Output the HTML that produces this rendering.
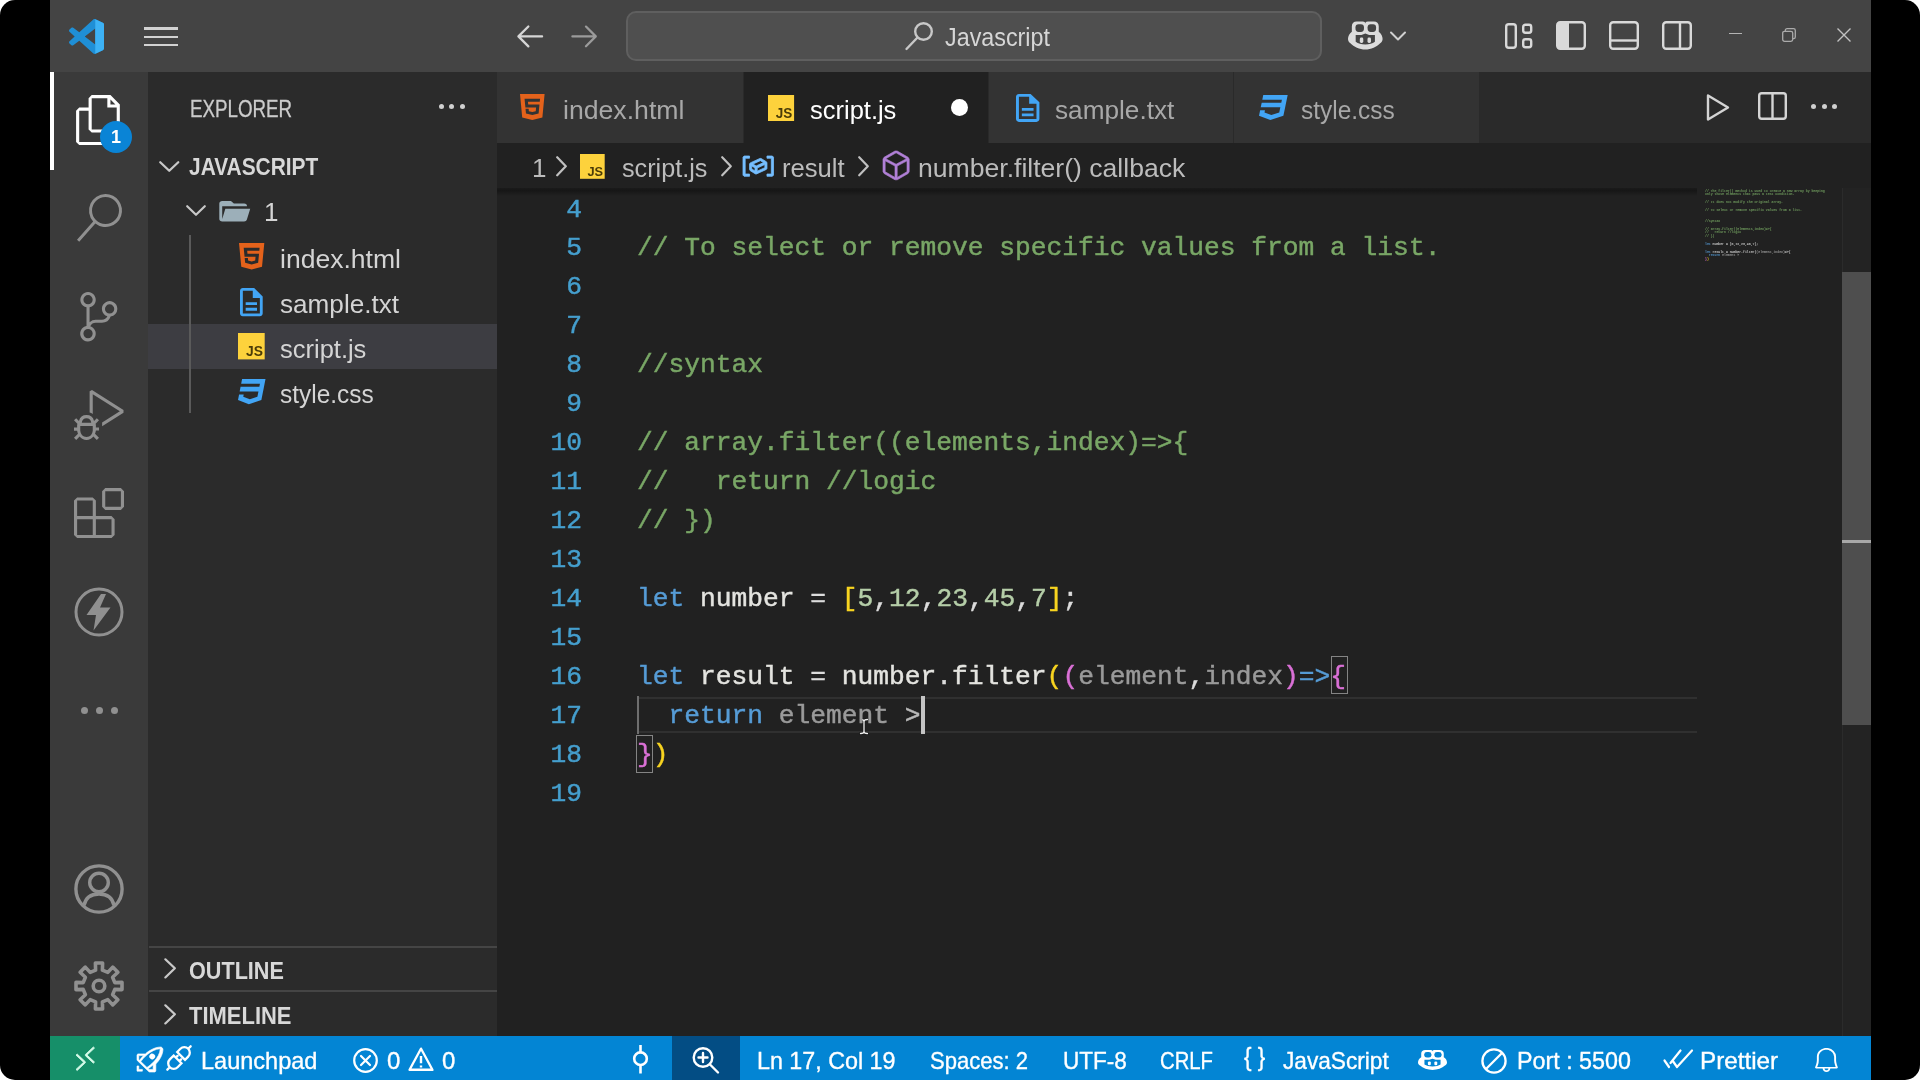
<!DOCTYPE html>
<html lang="en">
<head>
<meta charset="utf-8">
<title>script.js - Javascript - Visual Studio Code</title>
<style>
*{box-sizing:border-box;margin:0;padding:0}
html,body{width:1920px;height:1080px;overflow:hidden;background:#fff}
body{font-family:"Liberation Sans",sans-serif;color:#ccc;position:relative}
.abs{position:absolute}
#frame{position:absolute;left:0;top:0;width:1920px;height:1080px;background:#000;border-radius:15px;overflow:hidden}
#win{position:absolute;left:50px;top:0;width:1821px;height:1080px;background:#212121;overflow:hidden;will-change:transform}
/* title bar */
#title{position:absolute;left:0;top:0;width:1821px;height:72px;background:#444444}
#search{position:absolute;left:576px;top:11px;width:696px;height:50px;border-radius:10px;background:#4f4f4f;border:2px solid #5f5f5f}
#search span{position:absolute;left:317px;top:10px;font-size:25px;color:#d6d6d6;white-space:nowrap}
/* activity bar */
#act{position:absolute;left:0;top:72px;width:99px;height:964px;background:#3a3a3a}
#act .ind{position:absolute;left:0;top:0;width:4px;height:98px;background:#fff}
/* side bar */
#side{position:absolute;left:99px;top:72px;width:348px;height:964px;background:#2b2b2b;box-shadow:-1px 0 0 #2b2b2b}
#side .t{position:absolute;white-space:nowrap;font-size:26px;color:#d4d4d4;line-height:30px}
#side .b{font-weight:bold;font-size:23px;color:#d8d8d8}
#side .sel{position:absolute;left:-1px;top:252px;width:349px;height:45px;background:#3d3d42}
#side .guide{position:absolute;left:40.200px;top:163px;width:2px;height:178px;background:#5a5a5a}
#side .hr{position:absolute;left:0;width:348px;height:2px;background:#454545}
/* editor */
#tabs{position:absolute;left:447px;top:72px;width:1374px;height:71px;background:#2a2a2a}
.tab{position:absolute;top:0;height:71px;background:#333333}
.tab.on{background:#212121}
.tab span{position:absolute;top:22px;font-size:26px;line-height:32px;white-space:nowrap;color:#a8a8a8}
.tab.on span{color:#fff}
#crumb{position:absolute;left:447px;top:143px;width:1374px;height:45px;background:#212121}
#crumb span{position:absolute;top:8.5px;font-size:26px;line-height:32px;white-space:nowrap;color:#bcbcbc}
#crumbshadow{position:absolute;left:447px;top:188px;width:1200px;height:8px;background:linear-gradient(#1b1b1b,#161616 30%,rgba(33,33,33,0))}
#code{position:absolute;left:447px;top:188px;width:1374px;height:848px;font-family:"Liberation Mono",monospace;font-size:26.25px;-webkit-text-stroke:.45px currentColor}
.ln{position:absolute;left:0;width:85px;text-align:right;color:#459fce;height:39px;line-height:39px;white-space:pre}
.cl{position:absolute;left:140px;height:39px;line-height:39px;white-space:pre;color:#dcdcdc}
.c{color:#79a766}.k{color:#569cd6}.n{color:#b5cea8}.y{color:#f8d420}.p{color:#da70d6}.g{color:#9a9a9a}.w{color:#e4e4e0}
/* status */
#status{position:absolute;left:0;top:1036px;width:1821px;height:44px;background:#0385d4}
#status span{position:absolute;top:10.5px;font-size:24px;line-height:28px;color:#fff;white-space:nowrap;-webkit-text-stroke:.35px #fff}
svg{position:absolute;overflow:visible}
.sx{transform:scaleX(var(--s));transform-origin:0 0}
.g2{color:#b8b8b8}
#mini{transform:scale(.264);transform-origin:0 0;font-size:12px;line-height:14.400px;white-space:pre;color:#d0d0d0;opacity:.8;-webkit-text-stroke:.6px currentColor;width:480px}
#mini .c{color:#74a261}
#tabs svg,#tabs>.abs{z-index:2}
</style>
</head>
<body>
<div id="frame">
<div id="win">

<!-- TITLE BAR -->
<div id="title">

  <!-- vscode logo -->
  <svg style="left:19px;top:19px" width="35" height="35" viewBox="0 0 100 100">
    <path fill="#1f8fd6" fill-rule="evenodd" d="M70.9 99.3c1.6.6 3.4.6 5-.2l20.6-9.9c2.1-1 3.5-3.2 3.5-5.6V16.4c0-2.4-1.4-4.6-3.5-5.6L75.9.9c-2.1-1-4.5-.8-6.4.6-.3.2-.5.4-.7.6L29.4 38 12.2 25c-1.6-1.2-3.8-1.1-5.3.2l-5.5 5c-1.8 1.7-1.8 4.5 0 6.2L16.2 50 1.4 63.600c-1.800 1.700-1.800 4.500 0 6.200l5.500 5c1.500 1.300 3.700 1.400 5.300.2L29.400 62l39.400 35.900c.6.600 1.300 1.100 2.100 1.400zM75 27.300 45.100 50 75 72.700z"/>
    <path fill="#3db2f5" d="M75 0.500 L96.500 10.800 C98.600 11.800 100 14 100 16.400 V83.600 C100 86 98.600 88.200 96.500 89.200 L75 99.500 Z"/>
  </svg>
  <!-- hamburger -->
  <div class="abs" style="left:94px;top:27.300px;width:34px;height:2.6px;background:#d2d2d2"></div>
  <div class="abs" style="left:94px;top:35.500px;width:34px;height:2.6px;background:#d2d2d2"></div>
  <div class="abs" style="left:94px;top:43.700px;width:34px;height:2.6px;background:#d2d2d2"></div>
  <!-- nav arrows -->
  <svg style="left:467.200px;top:25px" width="26.500" height="22.800" viewBox="0 0 28 24" fill="none" stroke="#d6d6d6" stroke-width="2.4" stroke-linecap="round" stroke-linejoin="round"><path d="M26.500 12H2M12 1.500 1.500 12 12 22.500"/></svg>
  <svg style="left:520.600px;top:25px" width="26.200" height="22.800" viewBox="0 0 28 24" fill="none" stroke="#9b9b9b" stroke-width="2.4" stroke-linecap="round" stroke-linejoin="round"><path d="M1.500 12H26M16 1.500 26.500 12 16 22.500"/></svg>
  <!-- copilot -->
  <svg style="left:1297.800px;top:20px" width="34.600" height="31" viewBox="0 0 36 32" preserveAspectRatio="none">
    <path fill="#dcdcdc" d="M9 1.500h6.500c1.500 0 2.500 1 2.500 2 0-1 1-2 2.500-2H27c3 0 5 2 5 5v5.500c2.500 2 4 4.500 4 7.500 0 2-1 3.500-2.500 4.500C30 27.500 24 30.500 18 30.500S6 27.500 2.500 24C1 23 0 21.500 0 19.500c0-3 1.500-5.500 4-7.500V6.500c0-3 2-5 5-5z"/>
    <rect x="7.800" y="4.300" width="8.800" height="8" rx="3.200" fill="#444"/>
    <rect x="20.400" y="4.300" width="8.800" height="8" rx="3.200" fill="#444"/>
    <path fill="#444" d="M8 15.500h6l4 -1.500 4 1.500h6v7c-2.500 1.800-6 2.800-10 2.800s-7.500-1-10-2.800z"/>
    <rect x="12.300" y="18" width="3.600" height="5.800" rx="1.500" fill="#dcdcdc"/>
    <rect x="20.300" y="18" width="3.600" height="5.800" rx="1.500" fill="#dcdcdc"/>
  </svg>
  <svg style="left:1340px;top:31px" width="16" height="10" viewBox="0 0 16 10" fill="none" stroke="#d0d0d0" stroke-width="2" stroke-linecap="round" stroke-linejoin="round"><path d="M1 1.500 8 8.500 15 1.500"/></svg>
  <!-- layout controls -->
  <svg style="left:1455px;top:23px" width="28" height="26" viewBox="0 0 28 26" fill="none" stroke="#d9d9d9" stroke-width="2.400"><rect x="1.200" y="1.200" width="9.600" height="23.600" rx="2.500"/><rect x="18.200" y="1.700" width="8" height="8" rx="2.200"/><rect x="18.200" y="16.300" width="8" height="8" rx="2.200"/></svg>
  <svg style="left:1506px;top:21px" width="30" height="29" viewBox="0 0 30 29"><rect x="1.200" y="1.200" width="27.600" height="26.600" rx="3" fill="none" stroke="#d9d9d9" stroke-width="2.400"/><path fill="#d9d9d9" d="M2 3.500c0-1 .500-1.500 1.500-1.500H13v25H3.500C2.500 27 2 26.500 2 25.500z"/></svg>
  <svg style="left:1559px;top:21px" width="30" height="29" viewBox="0 0 30 29" fill="none" stroke="#d9d9d9" stroke-width="2.400"><rect x="1.200" y="1.200" width="27.600" height="26.600" rx="3"/><path d="M1.200 19.500h27.600"/></svg>
  <svg style="left:1612px;top:21px" width="30" height="29" viewBox="0 0 30 29" fill="none" stroke="#d9d9d9" stroke-width="2.400"><rect x="1.200" y="1.200" width="27.600" height="26.600" rx="3"/><path d="M18 1.200v26.600"/></svg>
  <!-- window controls -->
  <div class="abs" style="left:1679px;top:33px;width:13px;height:1.300px;background:#b4b4b4"></div>
  <svg style="left:1732px;top:28px" width="14" height="14" viewBox="0 0 14 14" fill="none" stroke="#ababab" stroke-width="1.300"><rect x=".700" y="3.300" width="10" height="10" rx="1.800"/><path d="M3.300 3.300V2.500c0-1 .800-1.800 1.800-1.800h6.400c1 0 1.800.800 1.800 1.800v6.400c0 1-.800 1.800-1.800 1.800h-.800"/></svg>
  <svg style="left:1787px;top:28px" width="14" height="14" viewBox="0 0 14 14" fill="none" stroke="#c2c2c2" stroke-width="1.400"><path d="M.500.500l13 13M13.500.500l-13 13"/></svg>
  <div id="search"><svg style="left:276.300px;top:8.200px" width="30" height="30" viewBox="0 0 30 30" fill="none" stroke="#c8c8c8" stroke-width="2.400" stroke-linecap="round"><circle cx="19.500" cy="10.500" r="8.300"/><path d="M13.500 16.500 2.500 28"/></svg><span class="sx" style="--s:.933">Javascript</span></div>
</div>

<!-- ACTIVITY BAR -->
<div id="act">
  <div class="ind"></div>

  <!-- files -->
  <svg style="left:24px;top:23px" width="50" height="50" viewBox="0 0 24 24"><path fill="#fff" d="M17.500 0h-9L7 1.500V6H2.500L1 7.500v15.070L2.500 24h12.070L16 22.570V18h4.700l1.300-1.430V4.500L17.500 0zm0 2.120l2.380 2.380H17.500V2.120zm-3 20.380h-12v-15H7v9.070L8.500 18h6v4.500zm6-6h-12v-15H16V6h4.500v10.500z"/></svg>
  <div class="abs" style="left:50px;top:49px;width:32px;height:32px;border-radius:16px;background:#0a84d6"></div>
  <span class="abs" style="left:50px;top:54px;width:32px;text-align:center;font-size:18px;font-weight:bold;color:#fff;line-height:22px">1</span>
  <!-- search -->
  <svg style="left:24.500px;top:122px" width="48" height="48" viewBox="0 0 24 24"><path fill="#909090" d="M15.250 0a8.250 8.250 0 0 0-6.180 13.720L1 22.880l1.120 1 8.050-9.120A8.251 8.251 0 1 0 15.250.010V0zm0 15a6.750 6.750 0 1 1 0-13.500 6.750 6.750 0 0 1 0 13.500z"/></svg>
  <!-- source control -->
  <svg style="left:24px;top:219.500px" width="49.500" height="49.500" viewBox="0 0 24 24"><path fill="#909090" d="M21.007 8.222A3.738 3.738 0 0 0 15.045 5.200a3.737 3.737 0 0 0 1.156 6.583 2.988 2.988 0 0 1-2.668 1.670h-2.990a4.456 4.456 0 0 0-2.989 1.165V7.400a3.737 3.737 0 1 0-1.494 0v9.117a3.776 3.776 0 1 0 1.816.099 2.990 2.990 0 0 1 2.668-1.667h2.990a4.484 4.484 0 0 0 4.223-3.039 3.736 3.736 0 0 0 3.250-3.687zM4.565 3.738a2.242 2.242 0 1 1 4.484 0 2.242 2.242 0 0 1-4.484 0zm4.484 16.441a2.242 2.242 0 1 1-4.484 0 2.242 2.242 0 0 1 4.484 0zm8.221-9.715a2.242 2.242 0 1 1 0-4.485 2.242 2.242 0 0 1 0 4.485z"/></svg>
  <!-- debug -->
  <svg style="left:24px;top:318px" width="50" height="50" viewBox="0 0 24 24"><path fill="#909090" d="M10.940 13.500l-1.320 1.320a3.730 3.730 0 0 0-7.240 0L1.060 13.500 0 14.560l1.720 1.720-.22.220V18H0v1.500h1.500v.080c.077.489.214.966.410 1.420L0 22.940 1.060 24l1.650-1.650A4.308 4.308 0 0 0 6 24a4.310 4.310 0 0 0 3.290-1.650L10.940 24 12 22.940 10.090 21c.198-.464.336-.951.410-1.450v-.100H12V18h-1.500v-1.500l-.22-.22L12 14.560l-1.060-1.060zM6 13.500a2.250 2.250 0 0 1 2.250 2.250h-4.500A2.250 2.250 0 0 1 6 13.500zm3 6a3.330 3.330 0 0 1-3 3 3.330 3.330 0 0 1-3-3v-2.250h6v2.250zm14.760-9.900v1.260L13.500 17.370V15.600l8.500-5.370L9 2v9.460a5.070 5.070 0 0 0-1.500-.72V.630L8.640 0l15.120 9.600z"/></svg>
  <!-- extensions -->
  <svg style="left:24px;top:416px" width="50" height="50" viewBox="0 0 24 24"><path fill="#909090" d="M13.500 1.500L15 0h7.500L24 1.500V9l-1.500 1.500H15L13.500 9V1.500zm1.500 0V9h7.500V1.500H15zM0 15V6l1.500-1.500H9L10.500 6v7.500H18l1.500 1.500v7.500L18 24H1.500L0 22.500V15zm9-1.500V6H1.500v7.500H9zM9 15H1.500v7.500H9V15zm1.500 7.500H18V15h-7.500v7.500z"/></svg>
  <!-- thunder -->
  <svg style="left:24px;top:515px" width="50" height="50" viewBox="0 0 50 50"><circle cx="25" cy="25" r="23" fill="none" stroke="#909090" stroke-width="3"/><path fill="#909090" d="M27 7 12.500 28h9.500L19.500 43.500 36.500 20.500H26L32 7z"/></svg>
  <!-- more -->
  <div class="abs" style="left:30.500px;top:634.500px;width:7px;height:7px;border-radius:4px;background:#909090"></div>
  <div class="abs" style="left:45.500px;top:634.500px;width:7px;height:7px;border-radius:4px;background:#909090"></div>
  <div class="abs" style="left:60.500px;top:634.500px;width:7px;height:7px;border-radius:4px;background:#909090"></div>
  <!-- account -->
  <svg style="left:24px;top:792px" width="50" height="50" viewBox="0 0 50 50" fill="none" stroke="#909090" stroke-width="3.400"><circle cx="25" cy="25" r="23.100"/><circle cx="25" cy="18.500" r="9.300"/><path d="M10 41.500c1.500-8 7.500-11.500 15-11.500s13.500 3.500 15 11.500"/></svg>
  <!-- gear -->
  <svg style="left:24px;top:889px" width="50" height="50" viewBox="0 0 50 50" fill="none" stroke="#909090" stroke-width="3.600" stroke-linejoin="round"><path d="M21.6 9.2 L21.4 2.0 L28.6 2.0 L28.4 9.2 L33.8 11.4 L38.7 6.1 L43.9 11.3 L38.6 16.2 L40.8 21.6 L48.0 21.4 L48.0 28.6 L40.8 28.4 L38.6 33.8 L43.9 38.7 L38.7 43.9 L33.8 38.6 L28.4 40.8 L28.6 48.0 L21.4 48.0 L21.6 40.8 L16.2 38.6 L11.3 43.9 L6.1 38.7 L11.4 33.8 L9.2 28.4 L2.0 28.6 L2.0 21.4 L9.2 21.6 L11.4 16.2 L6.1 11.3 L11.3 6.1 L16.2 11.4Z"/><circle cx="25" cy="25" r="5.800"/></svg>
</div>

<!-- SIDE BAR -->
<div id="side">
  <div class="sel"></div>
  <div class="guide"></div>
  <svg style="left:10px;top:89px" width="20.5" height="11" viewBox="0 0 20 11" preserveAspectRatio="none" fill="none" stroke="#c8c8c8" stroke-width="2.200" stroke-linecap="round" stroke-linejoin="round"><path d="M1.200 1.200 10 9.800 18.800 1.200"/></svg>
  <svg style="left:37px;top:133px" width="20" height="11" viewBox="0 0 20 11" preserveAspectRatio="none" fill="none" stroke="#c8c8c8" stroke-width="2.200" stroke-linecap="round" stroke-linejoin="round"><path d="M1.200 1.200 10 9.800 18.800 1.200"/></svg>
  <svg style="left:70px;top:129px" width="31.500" height="20.500" viewBox="1.800 4 21.600 16" preserveAspectRatio="none"><path fill="#9cafb9" d="M19 20H4c-1.110 0-2-.9-2-2V6c0-1.110.89-2 2-2h6l2 2h7a2 2 0 0 1 2 2H4v10l2.140-8h17.070l-2.280 8.500c-.23.870-1.010 1.500-1.930 1.500z"/></svg>
  <svg style="left:89.7px;top:170.5px" width="25.3" height="26.5" viewBox="4.070 3 15.860 18" preserveAspectRatio="none"><path fill="#e4621b" d="M12 17.56l4.07-1.13.55-6.1H9.38L9.2 8.3h7.6l.2-1.99H7l.56 6.01h6.89l-.23 2.580-2.220.600-2.220-.600-.140-1.660h-2l.29 3.190L12 17.560M4.070 3h15.860L18.500 19.200 12 21l-6.500-1.800L4.070 3z"/></svg>
  <svg style="left:91.3px;top:216px" width="22.7" height="28.3" viewBox="4 2 16 20" preserveAspectRatio="none"><path fill="#42a5f5" d="M14 2H6c-1.100 0-2 .9-2 2v16c0 1.100.9 2 2 2h12c1.100 0 2-.9 2-2V8l-6-6m4 18H6V4h7v5h5v11M8 12h8v2H8zm0 4h8v2H8z"/></svg>
  <svg style="left:89.3px;top:261.3px" width="26.7" height="26.4" viewBox="0 0 26 26" preserveAspectRatio="none"><rect width="26" height="26" fill="#fdd23c"/><text x="24.300" y="23" text-anchor="end" font-family="Liberation Sans, sans-serif" font-weight="bold" font-size="14" fill="#4a3c08" textLength="16.500" lengthAdjust="spacingAndGlyphs">JS</text></svg>
  <svg style="left:89px;top:306.7px" width="27.5" height="25.3" viewBox="2.060 3 19.880 18" preserveAspectRatio="none"><path fill="#42a5f5" d="M5 3l-.65 3.340h13.590L17.500 8.500H3.920l-.66 3.330h13.590l-.76 3.810-5.480 1.810-4.750-1.810.33-1.640H2.850l-.79 4 7.850 3 9.050-3 1.200-6.030.24-1.210L21.940 3H5z"/></svg>
  <div class="abs" style="left:289.500px;top:32px;width:5.400px;height:5.400px;border-radius:3px;background:#d0d0d0"></div>
  <div class="abs" style="left:300px;top:32px;width:5.400px;height:5.400px;border-radius:3px;background:#d0d0d0"></div>
  <div class="abs" style="left:310.500px;top:32px;width:5.400px;height:5.400px;border-radius:3px;background:#d0d0d0"></div>
  <svg style="left:14.800px;top:886.300px" width="12.200" height="20.700" viewBox="0 0 11 20" preserveAspectRatio="none" fill="none" stroke="#c8c8c8" stroke-width="2" stroke-linecap="round" stroke-linejoin="round"><path d="M1.200 1.200 9.800 10 1.200 18.800"/></svg>
  <svg style="left:14.800px;top:931.700px" width="12.200" height="20.700" viewBox="0 0 11 20" preserveAspectRatio="none" fill="none" stroke="#c8c8c8" stroke-width="2" stroke-linecap="round" stroke-linejoin="round"><path d="M1.200 1.200 9.800 10 1.200 18.800"/></svg>
  <span class="t sx" style="--s:.815;left:41px;top:22px;font-size:23px;color:#cccccc;-webkit-text-stroke:.3px #ccc">EXPLORER</span>
  <span class="t b sx" style="--s:.909;left:40px;top:80px">JAVASCRIPT</span>
  <span class="t" style="left:115px;top:125px">1</span>
  <span class="t sx" style="--s:1.021;left:131px;top:172px">index.html</span>
  <span class="t sx" style="--s:1.005;left:131px;top:217px">sample.txt</span>
  <span class="t sx" style="--s:.98;left:131px;top:262px">script.js</span>
  <span class="t sx" style="--s:.94;left:131px;top:307px">style.css</span>
  <div class="hr" style="top:874px"></div>
  <span class="t b sx" style="--s:.94;left:40px;top:883.5px">OUTLINE</span>
  <div class="hr" style="top:918px"></div>
  <span class="t b sx" style="--s:.955;left:40px;top:929px">TIMELINE</span>
</div>

<!-- TABS -->
<div id="tabs">
  <svg style="left:23.4px;top:22px" width="24.6" height="26" viewBox="4.070 3 15.860 18" preserveAspectRatio="none"><path fill="#e4621b" d="M12 17.56l4.07-1.13.55-6.1H9.38L9.2 8.3h7.6l.2-1.99H7l.56 6.01h6.89l-.23 2.580-2.220.600-2.220-.600-.140-1.660h-2l.29 3.190L12 17.560M4.070 3h15.860L18.500 19.200 12 21l-6.500-1.800L4.070 3z"/></svg>
  <svg style="left:270.8px;top:23px" width="26.1" height="26" viewBox="0 0 26 26" preserveAspectRatio="none"><rect width="26" height="26" fill="#fdd23c"/><text x="24.300" y="23" text-anchor="end" font-family="Liberation Sans, sans-serif" font-weight="bold" font-size="14" fill="#4a3c08" textLength="16.500" lengthAdjust="spacingAndGlyphs">JS</text></svg>
  <svg style="left:519px;top:21.6px" width="23.4" height="27.9" viewBox="4 2 16 20" preserveAspectRatio="none"><path fill="#42a5f5" d="M14 2H6c-1.100 0-2 .9-2 2v16c0 1.100.9 2 2 2h12c1.100 0 2-.9 2-2V8l-6-6m4 18H6V4h7v5h5v11M8 12h8v2H8zm0 4h8v2H8z"/></svg>
  <svg style="left:761.6px;top:23px" width="28.7" height="25" viewBox="2.060 3 19.880 18" preserveAspectRatio="none"><path fill="#42a5f5" d="M5 3l-.65 3.340h13.590L17.500 8.500H3.920l-.66 3.330h13.590l-.76 3.810-5.480 1.810-4.750-1.810.33-1.640H2.850l-.79 4 7.850 3 9.050-3 1.200-6.030.24-1.210L21.940 3H5z"/></svg>
  <div class="abs" style="left:453.500px;top:26.500px;width:17.400px;height:17.400px;border-radius:9px;background:#fff"></div>
  <svg style="left:1209px;top:21px" width="24" height="29" viewBox="0 0 24 29" fill="none" stroke="#d4d4d4" stroke-width="2.400" stroke-linejoin="round"><path d="M2 2.500 22 14.500 2 26.500z"/></svg>
  <svg style="left:1261px;top:20px" width="29" height="28" viewBox="0 0 29 28" fill="none" stroke="#d4d4d4" stroke-width="2.400"><rect x="1.200" y="1.200" width="26.600" height="25.600" rx="2.500"/><path d="M14.500 1.200v25.600"/></svg>
  <div class="abs" style="left:1314.3px;top:32.200px;width:4.900px;height:4.900px;border-radius:3px;background:#cfcfcf"></div>
  <div class="abs" style="left:1324.8px;top:32.200px;width:4.900px;height:4.900px;border-radius:3px;background:#cfcfcf"></div>
  <div class="abs" style="left:1335.3px;top:32.200px;width:4.900px;height:4.900px;border-radius:3px;background:#cfcfcf"></div>
  <div class="tab" style="left:0;width:246px"><span class="sx" style="--s:1.0245;left:66px">index.html</span></div>
  <div class="tab on" style="left:247px;width:244px"><span class="sx" style="--s:.98;left:66px">script.js</span></div>
  <div class="tab" style="left:492px;width:244px"><span class="sx" style="--s:1.007;left:66px">sample.txt</span></div>
  <div class="tab" style="left:737px;width:245px"><span class="sx" style="--s:.94;left:67px">style.css</span></div>
</div>

<!-- BREADCRUMB -->
<div id="crumb">
  <svg style="left:58.6px;top:12.5px" width="11" height="20.5" viewBox="0 0 11 20" preserveAspectRatio="none" fill="none" stroke="#c0c0c0" stroke-width="2.200" stroke-linecap="round" stroke-linejoin="round"><path d="M1.200 1.200 9.800 10 1.200 18.800"/></svg>
  <svg style="left:83.3px;top:11px" width="24.7" height="24.8" viewBox="0 0 26 26" preserveAspectRatio="none"><rect width="26" height="26" fill="#fdd23c"/><text x="24.300" y="23" text-anchor="end" font-family="Liberation Sans, sans-serif" font-weight="bold" font-size="14" fill="#4a3c08" textLength="16.500" lengthAdjust="spacingAndGlyphs">JS</text></svg>
  <svg style="left:223.5px;top:12.5px" width="11" height="20.5" viewBox="0 0 11 20" preserveAspectRatio="none" fill="none" stroke="#c0c0c0" stroke-width="2.200" stroke-linecap="round" stroke-linejoin="round"><path d="M1.200 1.200 9.800 10 1.200 18.800"/></svg>
  <svg style="left:246px;top:12.500px" width="30.500" height="20.300" viewBox="1 4 14 9" preserveAspectRatio="none"><path fill="#75beff" stroke="#75beff" stroke-width=".35" d="M2 5h2V4H1.500l-.5.500v8l.5.500H4v-1H2V5zm12.500-1H12v1h2v7h-2v1h2.500l.5-.500v-8l-.5-.500zm-2.740 2.570L12 7v2.510l-.3.450-4.500 2h-.46l-2.500-1.500-.24-.430v-2.500l.3-.460 4.500-2h.46l2.500 1.500zM5 9.710l1.500.900V9.280L5 8.380v1.330zm.580-2.150l1.450.870 3.390-1.500-1.450-.870-3.390 1.500zm1.950 3.170l3.500-1.560v-1.400l-3.500 1.550v1.410z"/></svg>
  <svg style="left:360.7px;top:12.5px" width="11" height="20.5" viewBox="0 0 11 20" preserveAspectRatio="none" fill="none" stroke="#c0c0c0" stroke-width="2.200" stroke-linecap="round" stroke-linejoin="round"><path d="M1.200 1.200 9.800 10 1.200 18.800"/></svg>
  <svg style="left:385.500px;top:7.800px" width="26.200" height="28.800" viewBox="2.020 1 11.980 13.710" preserveAspectRatio="none"><path fill="#b180d7" stroke="#b180d7" stroke-width=".3" d="M13.510 4l-5-3h-1l-5 3-.49.860v6l.49.850 5 3h1l5-3 .49-.850v-6L13.510 4zm-6 9.560l-4.500-2.700V5.700l4.500 2.450v5.410zM3.270 4.700l4.740-2.840 4.740 2.840-4.740 2.590L3.270 4.700zm9.740 6.160l-4.500 2.700V8.150l4.500-2.450v5.160z"/></svg>
  <span style="left:35px">1</span>
  <span class="sx" style="--s:.97;left:125px">script.js</span>
  <span class="sx" style="--s:.986;left:285px">result</span>
  <span class="sx" style="--s:1.022;left:421px">number.filter() callback</span>
</div>

<!-- CODE -->
<div id="code">

  <!-- current line -->
  <div class="abs" style="left:140px;top:508.500px;width:1060px;height:2px;background:#303030"></div>
  <div class="abs" style="left:140px;top:542.500px;width:1060px;height:2px;background:#303030"></div>
  <!-- indent guide -->
  <div class="abs" style="left:139.500px;top:508px;width:2px;height:38px;background:#6e6e6e"></div>
  <!-- bracket match boxes -->
  <div class="abs" style="left:833.500px;top:468px;width:17px;height:38px;border:1.800px solid #848484"></div>
  <div class="abs" style="left:139px;top:546.500px;width:16.500px;height:38px;border:1.800px solid #848484"></div>
  <!-- text cursor -->
  <div class="abs" style="left:423.500px;top:507.500px;width:4px;height:38.500px;background:#c4c4c4"></div>
  <!-- mouse i-beam -->
  <svg style="left:362px;top:530px" width="10" height="17" viewBox="0 0 10 17" fill="none" stroke-linecap="round"><path d="M1.500 1.500h2.500M6 1.500h2.500M5 2.500v12M1.500 15.500h2.500M6 15.500h2.500" stroke="#1a1a1a" stroke-width="3"/><path d="M1.500 1.500C3.500 1.500 5 2 5 3.500 5 2 6.500 1.500 8.500 1.500M5 3.500v10M1.500 15.500C3.500 15.500 5 15 5 13.500 5 15 6.500 15.500 8.500 15.500" stroke="#f0f0f0" stroke-width="1.300"/></svg>
  <!-- minimap -->
  <div id="mini" class="abs" style="left:1207.500px;top:0.600px"><div class="c">// The filter() method is used to create a new array by keeping</div><div class="c">only those elements that pass a test condition.</div><div>&nbsp;</div><div class="c">// It does not modify the original array.</div><div>&nbsp;</div><div class="c">// To select or remove specific values from a list.</div><div>&nbsp;</div><div>&nbsp;</div><div class="c">//syntax</div><div>&nbsp;</div><div class="c">// array.filter((elements,index)=&gt;{</div><div class="c">//   return //logic</div><div class="c">// })</div><div>&nbsp;</div><div class="m"><span class="k">let</span> number = [5,12,23,45,7];</div><div>&nbsp;</div><div class="m"><span class="k">let</span> result = number.filter(<span class="g">(element,index)</span>=&gt;{</div><div class="m">  <span class="k">return</span> <span class="g">element &gt;</span></div><div class="m"><span class="p">}</span><span class="y">)</span></div></div>
  <!-- scrollbar -->
  <div class="abs" style="left:1345px;top:0;width:29px;height:848px;background:#232323;border-left:1.500px solid #2b2b2b"></div>
  <div class="abs" style="left:1345px;top:84px;width:29px;height:453px;background:#4e4e4e"></div>
  <div class="abs" style="left:1345px;top:351.500px;width:29px;height:3px;background:#a8a8a8"></div>
  <div class="ln" style="top:2.50px">4</div>
  <div class="ln" style="top:41.45px">5</div>
  <div class="cl" style="top:41.45px"><span class="c">// To select or remove specific values from a list.</span></div>
  <div class="ln" style="top:80.40px">6</div>
  <div class="ln" style="top:119.35px">7</div>
  <div class="ln" style="top:158.30px">8</div>
  <div class="cl" style="top:158.30px"><span class="c">//syntax</span></div>
  <div class="ln" style="top:197.25px">9</div>
  <div class="ln" style="top:236.20px">10</div>
  <div class="cl" style="top:236.20px"><span class="c">// array.filter((elements,index)=&gt;{</span></div>
  <div class="ln" style="top:275.15px">11</div>
  <div class="cl" style="top:275.15px"><span class="c">//   return //logic</span></div>
  <div class="ln" style="top:314.10px">12</div>
  <div class="cl" style="top:314.10px"><span class="c">// })</span></div>
  <div class="ln" style="top:353.05px">13</div>
  <div class="ln" style="top:392.00px">14</div>
  <div class="cl" style="top:392.00px"><span class="k">let</span> <span class="w">number</span> = <span class="y">[</span><span class="n">5</span>,<span class="n">12</span>,<span class="n">23</span>,<span class="n">45</span>,<span class="n">7</span><span class="y">]</span>;</div>
  <div class="ln" style="top:430.95px">15</div>
  <div class="ln" style="top:469.90px">16</div>
  <div class="cl" style="top:469.90px"><span class="k">let</span> <span class="w">result</span> = <span class="w">number</span>.<span class="w">filter</span><span class="y">(</span><span class="p">(</span><span class="g">element</span>,<span class="g">index</span><span class="p">)</span><span class="k">=&gt;</span><span class="p">{</span></div>
  <div class="ln" style="top:508.85px">17</div>
  <div class="cl" style="top:508.85px">  <span class="k">return</span> <span class="g">element</span> <span class="g2">&gt;</span></div>
  <div class="ln" style="top:547.80px">18</div>
  <div class="cl" style="top:547.80px"><span class="p">}</span><span class="y">)</span></div>
  <div class="ln" style="top:586.75px">19</div>
</div>
<div id="crumbshadow"></div>

<!-- STATUS BAR -->
<div id="status">
  <div class="abs" style="left:0;top:0;width:69.500px;height:44px;background:#168f69"></div>
  <div class="abs" style="left:622px;top:0;width:68px;height:44px;background:#034d84"></div>
  <svg style="left:25.500px;top:11px" width="18.500" height="23.500" viewBox="3 1 9.904 13.360" preserveAspectRatio="none"><path fill="#d6fbe9" stroke="#d6fbe9" stroke-width=".45" d="M12.904 9.570L8.928 5.596l3.976-3.976-.619-.62L8 5.286v.619l4.285 4.285.62-.618zM3 5.620l4.072 4.050L3 13.739l.619.619L8 9.979v-.619l-4.381-4.380-.619.640z"/></svg>
  <svg style="left:87px;top:10.500px" width="26" height="25" viewBox="1 1 14.500 14.500" preserveAspectRatio="none"><path fill="#fff" stroke="#fff" stroke-width=".35" d="M14.491 1c-3.598.004-6.654 1.983-8.835 4H1.500l-.5.500v3l.147.354.991.991.001.009 4.500 4.500h.008l.999 1L8 15.500h3l.5-.500v-4.154c2.019-2.178 3.996-5.233 3.992-8.846l-.501-.500L14.491 1zM2 6h2.643a23.828 23.828 0 0 0-2.225 2.710L2 8.294V6zm5.700 8l-.42-.423a23.590 23.590 0 0 0 2.715-2.216V14H7.700zm-1.143-1.144L3.136 9.437C4.128 8 8.379 2.355 13.978 2.016c-.326 5.612-5.987 9.853-7.421 10.840zM4 15v-1H2v-2H1v3h3zm6.748-7.667a1.500 1.500 0 1 0-2.496-1.666 1.500 1.500 0 0 0 2.495 1.666z"/></svg>
  <svg style="left:111.500px;top:15px" width="34" height="14" viewBox="0 0 34 14" fill="none" stroke="#fff" stroke-width="2.300" stroke-linecap="round" transform="rotate(-45)"><path d="M0.500 7H4M15 1.500H9.500a5.500 5.500 0 0 0 0 11H15zM15 4.500h2.500M15 9.500h2.500M20 1.500h4.500a5.500 5.500 0 0 1 0 11H20zM30 7h3.500"/></svg>
  <svg style="left:303px;top:12px" width="25" height="25" viewBox="0 0 25 25" fill="none" stroke="#fff" stroke-width="2.200" stroke-linecap="round"><circle cx="12.500" cy="12.500" r="11.300"/><path d="M8 8l9 9M17 8l-9 9"/></svg>
  <svg style="left:358px;top:10.500px" width="26" height="24.500" viewBox="0 0 26 22" preserveAspectRatio="none" fill="none" stroke="#fff" stroke-width="2.200" stroke-linejoin="round"><path d="M13 1.500 24.500 20.500H1.500z"/><path d="M13 8v6.500M13 16.500v2" stroke-width="2.400"/></svg>
  <svg style="left:580px;top:8px" width="21" height="30" viewBox="0 0 21 30" fill="none" stroke="#fff" stroke-width="2.600"><circle cx="10.500" cy="14.700" r="6.300"/><path d="M10.500 1v7.500M10.500 21v8.500"/></svg>
  <svg style="left:641px;top:9px" width="30" height="30" viewBox="0 0 30 30" fill="none" stroke="#fff" stroke-width="2.400" stroke-linecap="round"><circle cx="12" cy="12.500" r="9.300"/><path d="M19 19.500 27 27.500M12 8v9M7.500 12.500h9"/></svg>
  <span class="sx" style="--s:.9;left:1194px;top:7px;font-size:25px">{ }</span>
  <svg style="left:1368px;top:13px" width="29" height="22" viewBox="0 0 36 32" preserveAspectRatio="none"><path fill="#fff" d="M9 1.500h6.500c1.500 0 2.500 1 2.500 2 0-1 1-2 2.500-2H27c3 0 5 2 5 5v5.500c2.500 2 4 4.500 4 7.500 0 2-1 3.500-2.500 4.500C30 27.500 24 30.500 18 30.500S6 27.500 2.500 24C1 23 0 21.500 0 19.500c0-3 1.500-5.500 4-7.500V6.500c0-3 2-5 5-5z"/><rect x="7.800" y="4.300" width="8.800" height="8" rx="3.200" fill="#0385d4"/><rect x="20.400" y="4.300" width="8.800" height="8" rx="3.200" fill="#0385d4"/><path fill="#0385d4" d="M8 15.500h6l4 -1.500 4 1.500h6v7c-2.500 1.800-6 2.800-10 2.800s-7.500-1-10-2.800z"/><rect x="12.300" y="18" width="3.600" height="5.800" rx="1.500" fill="#fff"/><rect x="20.300" y="18" width="3.600" height="5.800" rx="1.500" fill="#fff"/></svg>
  <svg style="left:1431px;top:12px" width="26" height="26" viewBox="0 0 26 26" fill="none" stroke="#fff" stroke-width="2.300" stroke-linecap="round"><circle cx="13" cy="13" r="11.600"/><path d="M5 21 21 5"/></svg>
  <svg style="left:1613px;top:13px" width="30" height="20" viewBox="0 0 30 20" fill="none" stroke="#fff" stroke-width="2.200" stroke-linecap="round" stroke-linejoin="round"><path d="M1.500 11.500 6 18M9.500 11.500 14 18 29 1.500M7.500 14 17.500 1.500" /></svg>
  <svg style="left:1764.500px;top:11.500px" width="23" height="24" viewBox="2 1 12 14" preserveAspectRatio="none"><path fill="#fff" d="M13.377 10.573a7.630 7.630 0 0 1-.383-2.380V6.195a5.115 5.115 0 0 0-1.268-3.446 5.138 5.138 0 0 0-3.242-1.722c-.694-.072-1.400 0-2.070.227-.670.215-1.280.574-1.794 1.053a4.923 4.923 0 0 0-1.208 1.675 5.067 5.067 0 0 0-.431 2.022v2.200a7.610 7.610 0 0 1-.383 2.370L2 12.343l.479.658h3.505c0 .526.215 1.040.586 1.412.37.370.885.586 1.412.586.526 0 1.040-.215 1.411-.586s.587-.886.587-1.412h3.505l.478-.658-.586-1.770zm-4.690 3.147a.997.997 0 0 1-.705.299.997.997 0 0 1-.706-.300.997.997 0 0 1-.300-.705h1.999a.939.939 0 0 1-.287.706zm-5.515-1.710l.371-1.114a8.633 8.633 0 0 0 .443-2.691V6.004c0-.563.120-1.113.347-1.616.227-.514.550-.969.969-1.340.419-.382.910-.670 1.436-.837.538-.18 1.100-.24 1.650-.18a4.147 4.147 0 0 1 2.597 1.400 4.133 4.133 0 0 1 1.004 2.776v2.010c0 .909.144 1.818.443 2.691l.371 1.113h-9.630v-.012z"/></svg>
  <span class="sx" style="--s:.98;left:151px">Launchpad</span>
  <span style="left:337px">0</span>
  <span style="left:392px">0</span>
  <span class="sx" style="--s:.97;left:707px">Ln 17, Col 19</span>
  <span class="sx" style="--s:.918;left:880px">Spaces: 2</span>
  <span class="sx" style="--s:.94;left:1013px">UTF-8</span>
  <span class="sx" style="--s:.845;left:1110px">CRLF</span>
  <span class="sx" style="--s:.944;left:1233px">JavaScript</span>
  <span class="sx" style="--s:.97;left:1467px">Port : 5500</span>
  <span class="sx" style="--s:1.01;left:1650px">Prettier</span>
</div>

</div>
</div>
</body>
</html>
